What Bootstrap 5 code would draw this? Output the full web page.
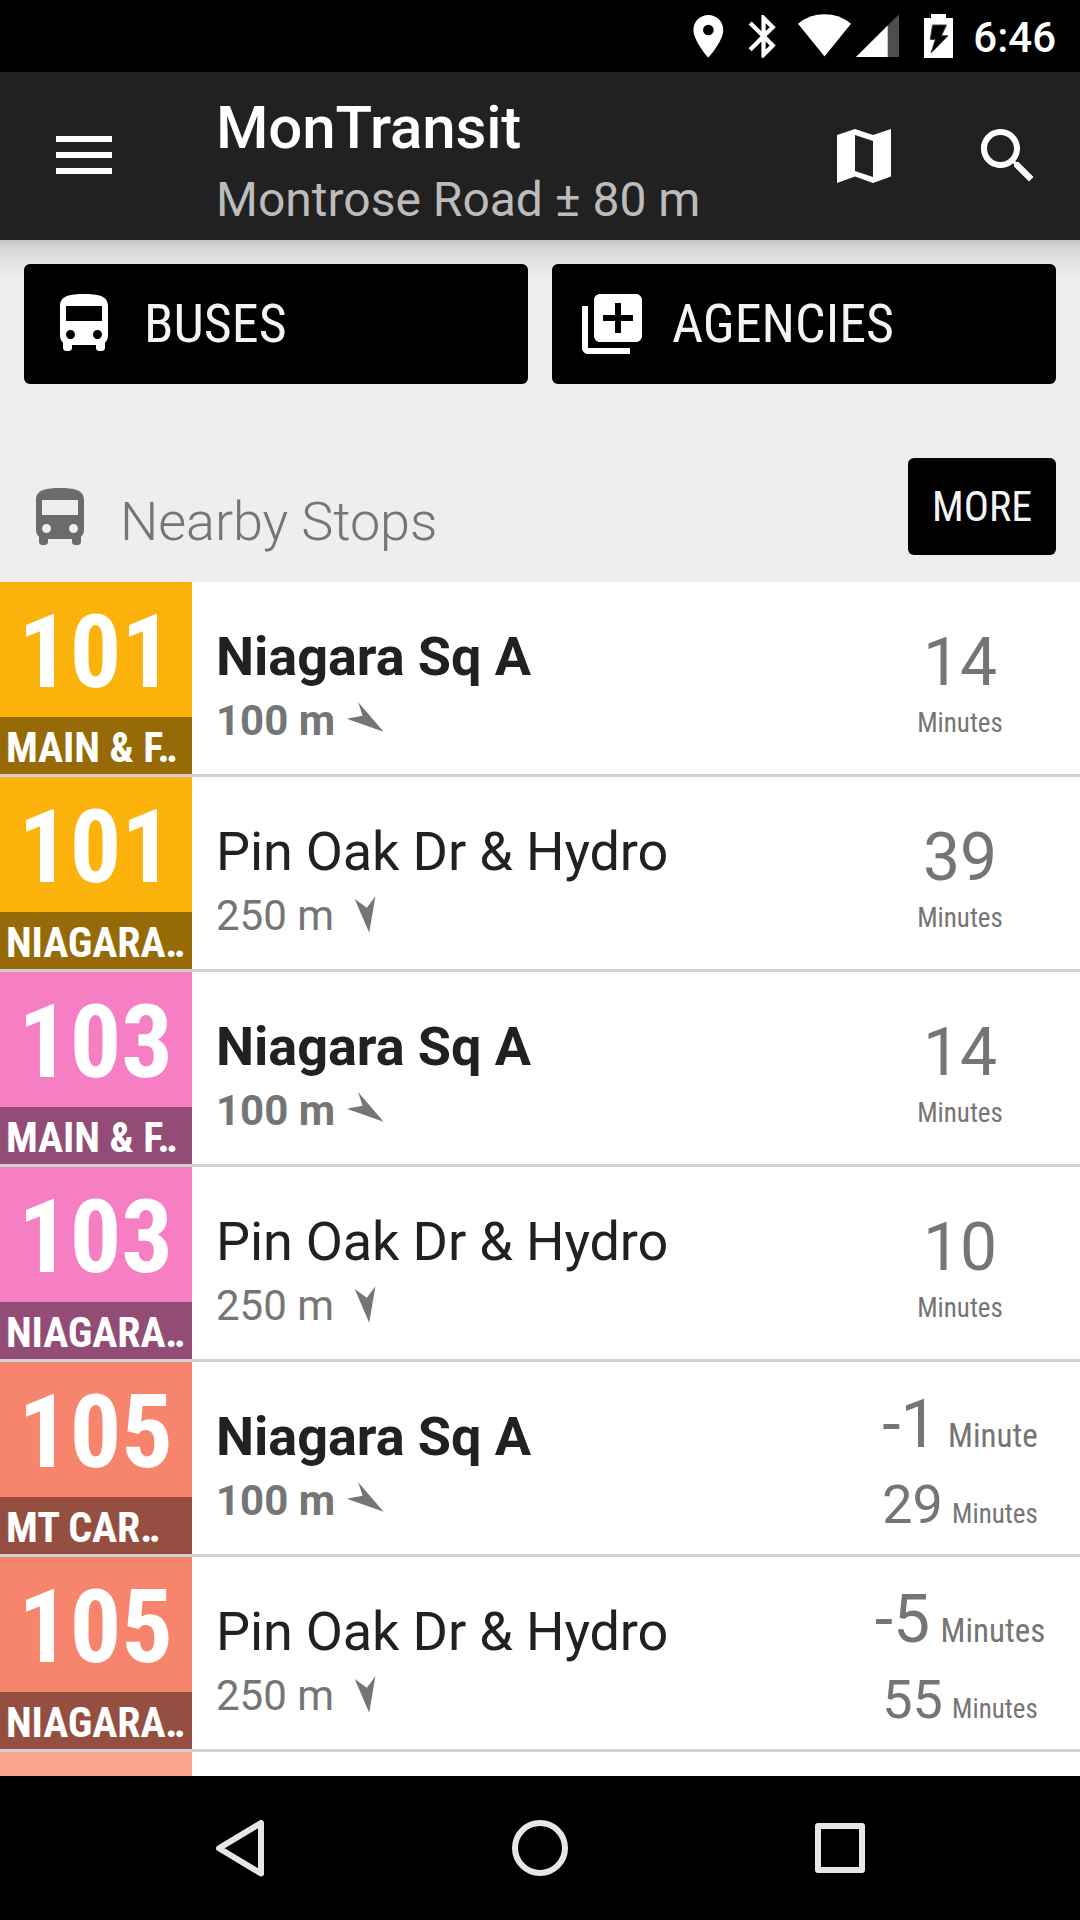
<!DOCTYPE html>
<html lang="en">
<head>
<meta charset="utf-8">
<meta name="viewport" content="width=device-width, initial-scale=1">
<title>MonTransit</title>
<link href="https://cdn.jsdelivr.net/npm/bootstrap@5.3.0/dist/css/bootstrap.min.css" rel="stylesheet">
<style>
body{font-family:Roboto,"Liberation Sans",sans-serif;width:1080px;height:1920px;overflow:hidden;background:#eee;color:#212121}
svg{display:block;flex:none}
.cond{font-family:"Roboto Condensed",Roboto,sans-serif;font-stretch:75%}
.status{height:72px;background:#000;padding-right:24px}
.clock{font-size:42px;line-height:50px;font-weight:500;margin-top:13px;margin-left:14px;color:#fff}
.appbar{height:168px;background:#212121;color:#fff;padding:0 36px 0 56px}
.titles{margin-left:104px;padding-top:21px}
.t1{font-size:60px;line-height:70px;font-weight:500;letter-spacing:-.12px}
.t2{font-size:48px;line-height:56px;margin-top:9px;color:#bcbcbc}
.ic-menu{margin-top:64px}
.ic-map{margin:57px 81px 0 0}
.ic-search{margin-top:48px}
.ic-section{margin-top:24px}
.shade{height:40px;margin-bottom:-40px;background:linear-gradient(#c7c7c7 0 3px,#d0d0d0 3px,#e2e2e2 20px,#eee 40px)}
.top-buttons{padding:24px 24px 0;gap:24px}
.tile-btn{height:120px;background:#000;color:#f3f3f3;border:0;border-radius:6px;font-size:54px;line-height:64px;padding:0 24px;gap:24px;position:relative}
.section{height:198px;padding:74px 24px 0}
.section-title{font-size:54px;line-height:64px;font-weight:300;color:#757575;margin:32px 0 0 24px;letter-spacing:-.1px}
.more{width:148px;height:97px;background:#000;color:#f3f3f3;border:0;border-radius:6px;font-size:42px;line-height:50px;padding:0}
.stops{height:1194px;overflow:hidden;background:#fff}
.stop{height:195px;border-bottom:3px solid #d0d0d0}
.route{width:192px;color:#fff;font-weight:700}
.num{height:135px;font-size:102px;line-height:120px;padding:10px 1px 0 0}
.dir{height:57px;font-size:42px;line-height:53px;padding:4px 0 0 6px;white-space:nowrap;overflow:hidden;letter-spacing:-.1px}
.yellow{background:#fbb20b}.yellow .dir{background:#966a06}
.pink{background:#f67fc4}.pink .dir{background:#934c75}
.coral{background:#f7846c}.coral .dir{background:#944f40}
.pale{background:#f9a58e}
.info{padding:43px 0 0 24px}
.name{font-size:54px;line-height:64px;letter-spacing:-.14px}
.near .name{letter-spacing:-.05px}
.dist{font-size:42px;line-height:50px;margin-top:7px;color:#757575}
.arrow{margin:3px 0 0 9px}
.near{font-weight:700}
.eta{width:240px;color:#757575;padding-top:42px}
.eta.two{padding-top:24px}
.big{font-size:66px;line-height:78px}
.unit{font-size:27px;line-height:32px}
.big+.unit{margin-top:5px}
.mid{font-size:54px;line-height:64px}
.two .unit{word-spacing:3px}
.two .big .unit{font-size:33px}
.second{margin-top:9px}
.navkeys{height:144px;background:#000}
</style>
</head>
<body>
<div class="status d-flex justify-content-end">
  <svg width="298" height="72" viewBox="660 0 298 72" fill="#fff">
    <g transform="translate(681.8 10.8) scale(2.13)"><path fill-rule="evenodd" d="M12 2C8.13 2 5 5.13 5 9c0 5.25 7 13 7 13s7-7.75 7-13c0-3.87-3.13-7-7-7zm0 9.500a2.500 2.500 0 1 1 0-5 2.500 2.500 0 0 1 0 5z"/></g>
    <g transform="translate(737 10.800) scale(2.130)"><path d="M17.710 7.710L12 2h-1v7.590L6.410 5 5 6.410 10.590 12 5 17.590 6.410 19 11 14.410V22h1l5.710-5.710-4.300-4.290 4.300-4.290zM13 5.830l1.880 1.880L13 9.590V5.830zm1.880 10.460L13 18.170v-3.760l1.880 1.880z"/></g>
    <path d="M797 23.700Q808.500 14.300 823.500 14.300T850 23.700L823.500 56.500Z"/>
    <path fill="#4d4d4d" d="M898 14.300V57H855Z"/><path d="M886.700 25.600V57H855Z"/>
    <path d="M930 14h15v4h7v40h-29V18h7z"/>
    <path fill="#000" stroke="#444" stroke-width="1" d="M931.500 25h14l-5 10.700h6.500l-17 17.300 4.300-13.500h-5z"/>
  </svg>
  <div class="clock">6:46</div>
</div>
<header class="appbar d-flex align-items-start">
  <svg class="ic-menu" width="56" height="38" fill="#fff"><path d="M0 0h56v6H0zM0 16h56v6H0zM0 32h56v6H0z"/></svg>
  <div class="titles flex-grow-1"><div class="t1">MonTransit</div><div class="t2">Montrose Road ± 80 m</div></div>
  <svg class="ic-map" width="54" height="54" fill="#fff"><path fill-rule="evenodd" d="M0 6L18 0 36 6 54 0V47.500L36 54 18 47.500 0 54ZM18 6V42L36 48V12Z"/></svg>
  <svg class="ic-search" width="72" height="72" viewBox="0 0 24 24" fill="#fff"><path d="M15.500 14h-.790l-.280-.270C15.410 12.590 16 11.110 16 9.500 16 5.910 13.090 3 9.500 3S3 5.910 3 9.500 5.910 16 9.500 16c1.610 0 3.090-.590 4.230-1.570l.270.280v.790l5 4.990L20.490 19l-4.990-5zm-6 0C7.010 14 5 11.990 5 9.500S7.010 5 9.500 5 14 7.010 14 9.500 11.990 14 9.500 14z"/></svg>
</header>
<div class="shade"></div>
<svg width="0" height="0" class="position-absolute"><defs>
  <symbol id="bus" viewBox="0 0 24 24"><path d="M4 16c0 .88.39 1.67 1 2.220V20c0 .550.450 1 1 1h1c.550 0 1-.450 1-1v-1h8v1c0 .550.450 1 1 1h1c.550 0 1-.450 1-1v-1.780c.610-.550 1-1.340 1-2.220V6c0-3.500-3.580-4-8-4s-8 .500-8 4v10zm3.500 1c-.830 0-1.500-.670-1.500-1.500S6.670 14 7.500 14s1.500.670 1.500 1.500S8.330 17 7.500 17zm9 0c-.830 0-1.500-.670-1.500-1.500s.670-1.500 1.500-1.500 1.500.670 1.500 1.500-.670 1.500-1.500 1.500zm1.500-6H6V6h12v5z"/></symbol>
  <symbol id="se" viewBox="0 0 40 40"><path d="M2.800 19.700L18.600 16.700 14.100 3 39.600 32.700Z"/></symbol>
  <symbol id="south" viewBox="0 0 40 40"><path d="M11.700 5L23.800 13.700 32.400 2.300 26.200 38.700Z"/></symbol>
</defs></svg>
<div class="top-buttons d-flex">
  <button class="tile-btn cond flex-fill w-50 d-flex align-items-center text-start"><svg width="72" height="72" fill="#fff"><use href="#bus"/></svg><span>BUSES</span></button>
  <button class="tile-btn cond flex-fill w-50 d-flex align-items-center text-start"><svg width="72" height="72" viewBox="0 0 24 24" fill="#fff"><path d="M4 6H2v14c0 1.100.900 2 2 2h14v-2H4V6zm16-4H8c-1.100 0-2 .900-2 2v12c0 1.100.900 2 2 2h12c1.100 0 2-.900 2-2V4c0-1.100-.900-2-2-2zm-1 9h-4v4h-2v-4H9V9h4V5h2v4h4v2z"/></svg><span>AGENCIES</span></button>
</div>
<div class="section d-flex align-items-start">
  <svg class="ic-section" width="72" height="72" fill="#6b6b6b"><use href="#bus"/></svg>
  <div class="section-title flex-grow-1">Nearby Stops</div>
  <button class="more cond">MORE</button>
</div>
<main class="stops">
  <div class="stop d-flex"><div class="route cond yellow"><div class="num text-center">101</div><div class="dir">MAIN &amp; F‥</div></div><div class="info flex-grow-1 near"><div class="name">Niagara Sq A</div><div class="dist d-flex">100 m<svg class="arrow" width="40" height="40" fill="#757575"><use href="#se"/></svg></div></div><div class="eta text-center"><div class="big">14</div><div class="unit cond">Minutes</div></div></div>
  <div class="stop d-flex"><div class="route cond yellow"><div class="num text-center">101</div><div class="dir">NIAGARA‥</div></div><div class="info flex-grow-1"><div class="name">Pin Oak Dr &amp; Hydro</div><div class="dist d-flex">250 m<svg class="arrow" width="40" height="40" fill="#757575"><use href="#south"/></svg></div></div><div class="eta text-center"><div class="big">39</div><div class="unit cond">Minutes</div></div></div>
  <div class="stop d-flex"><div class="route cond pink"><div class="num text-center">103</div><div class="dir">MAIN &amp; F‥</div></div><div class="info flex-grow-1 near"><div class="name">Niagara Sq A</div><div class="dist d-flex">100 m<svg class="arrow" width="40" height="40" fill="#757575"><use href="#se"/></svg></div></div><div class="eta text-center"><div class="big">14</div><div class="unit cond">Minutes</div></div></div>
  <div class="stop d-flex"><div class="route cond pink"><div class="num text-center">103</div><div class="dir">NIAGARA‥</div></div><div class="info flex-grow-1"><div class="name">Pin Oak Dr &amp; Hydro</div><div class="dist d-flex">250 m<svg class="arrow" width="40" height="40" fill="#757575"><use href="#south"/></svg></div></div><div class="eta text-center"><div class="big">10</div><div class="unit cond">Minutes</div></div></div>
  <div class="stop d-flex"><div class="route cond coral"><div class="num text-center">105</div><div class="dir">MT CAR‥</div></div><div class="info flex-grow-1 near"><div class="name">Niagara Sq A</div><div class="dist d-flex">100 m<svg class="arrow" width="40" height="40" fill="#757575"><use href="#se"/></svg></div></div><div class="eta two text-center"><div class="big">-1<span class="unit cond"> Minute</span></div><div class="mid second">29<span class="unit cond"> Minutes</span></div></div></div>
  <div class="stop d-flex"><div class="route cond coral"><div class="num text-center">105</div><div class="dir">NIAGARA‥</div></div><div class="info flex-grow-1"><div class="name">Pin Oak Dr &amp; Hydro</div><div class="dist d-flex">250 m<svg class="arrow" width="40" height="40" fill="#757575"><use href="#south"/></svg></div></div><div class="eta two text-center"><div class="big">-5<span class="unit cond"> Minutes</span></div><div class="mid second">55<span class="unit cond"> Minutes</span></div></div></div>
  <div class="stop d-flex"><div class="route pale"></div></div>
</main>
<nav class="navkeys d-flex justify-content-center align-items-center">
  <svg width="660" height="60" viewBox="210 1818 660 60" fill="none" stroke="#e6e6e6" stroke-width="6" stroke-linejoin="round"><path d="M219 1848.300L261 1823V1873.500Z"/><circle cx="540" cy="1848" r="25"/><rect x="818" y="1826" width="44" height="44"/></svg>
</nav>
<script src="https://cdn.jsdelivr.net/npm/bootstrap@5.3.0/dist/js/bootstrap.bundle.min.js"></script>
</body>
</html>
